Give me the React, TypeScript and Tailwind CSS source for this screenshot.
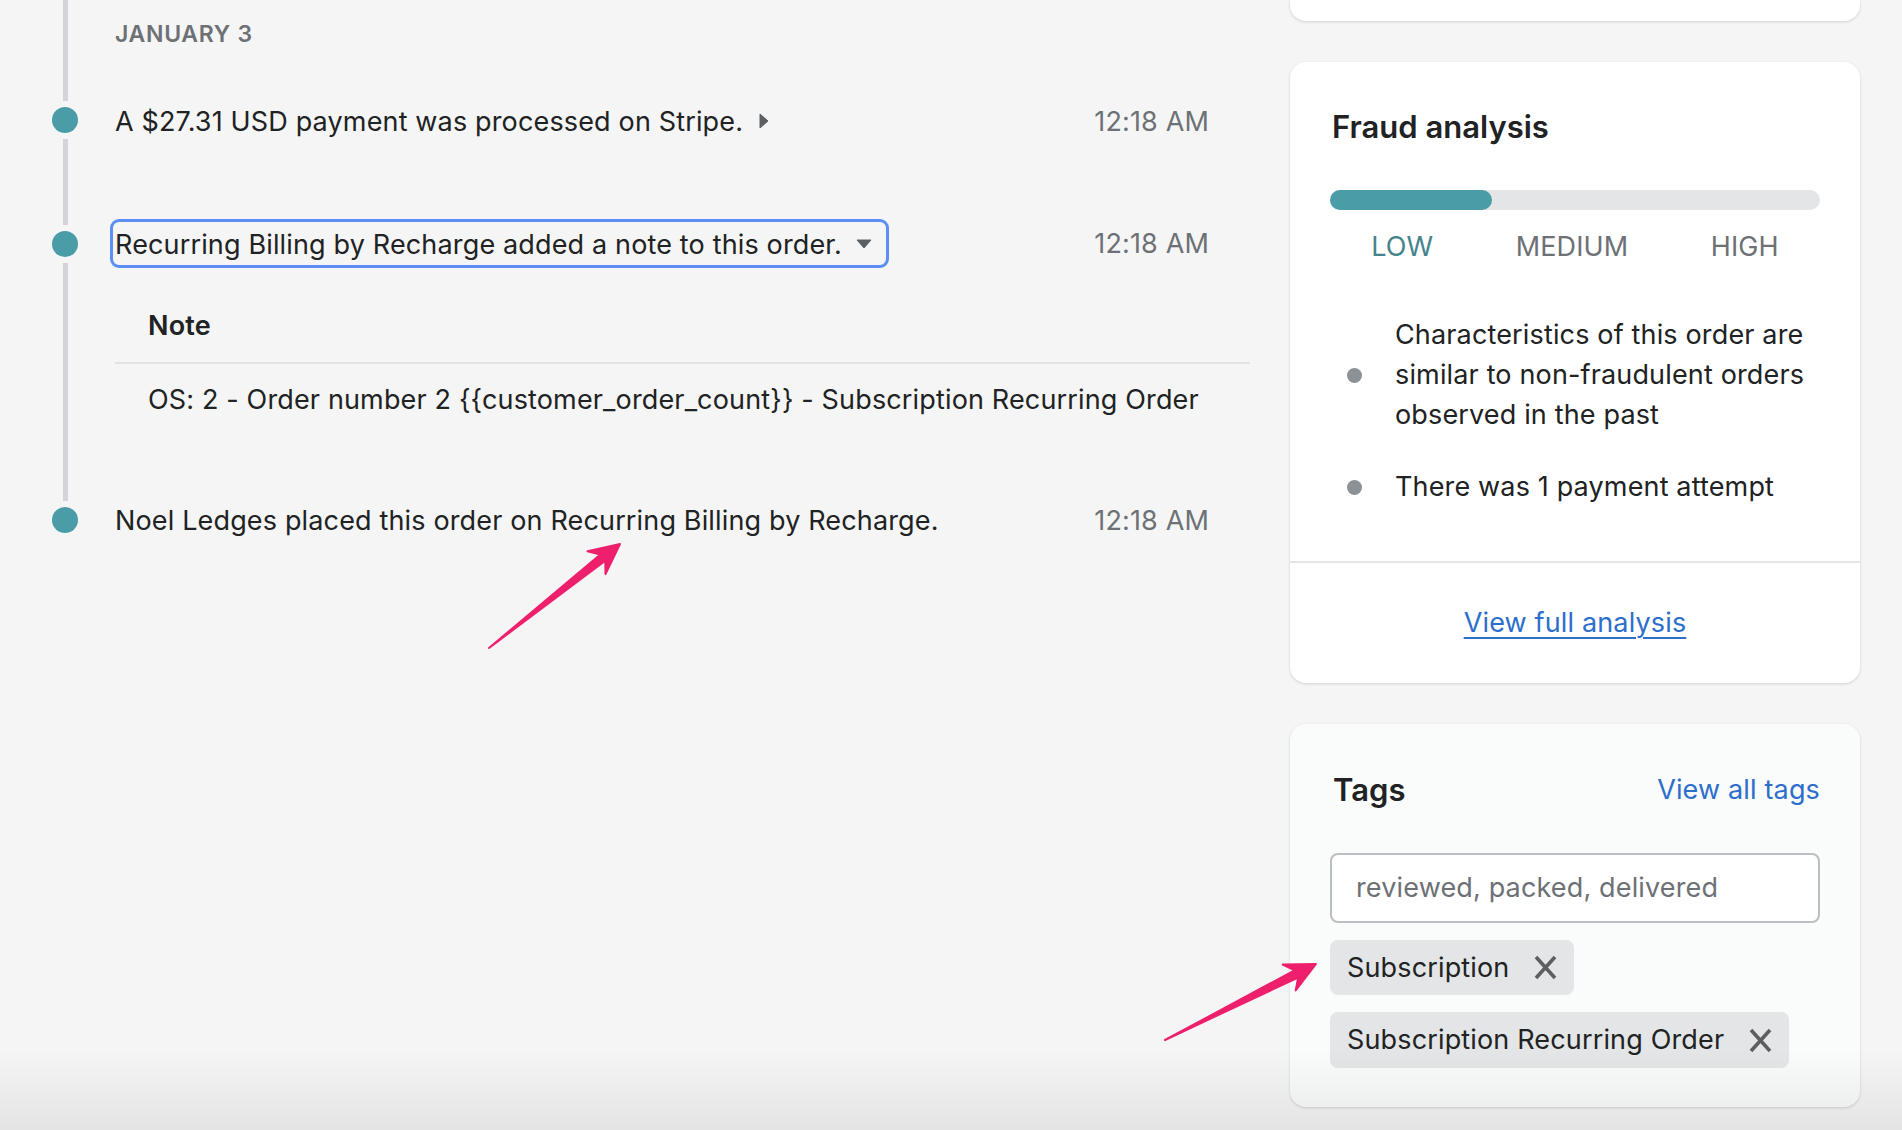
import React from "react";

function Bar({ grow = true }: { grow?: boolean }) {
  return <div className={grow ? "w-[5px] flex-1 bg-[#d3d4d7]" : "w-[5px] bg-[#d3d4d7]"} />;
}

function Dot() {
  return <div className="my-[6px] size-[26px] flex-none rounded-full bg-[#4a9ca7]" />;
}

function Gutter({ kind }: { kind: "line" | "dot" | "dotEnd" }) {
  return (
    <div className="flex w-[115px] flex-none">
      <div className="ml-[52px] flex w-[26px] flex-col items-center">
        {kind === "line" && <Bar />}
        {kind === "dot" && (
          <>
            <Bar />
            <Dot />
            <Bar />
          </>
        )}
        {kind === "dotEnd" && (
          <>
            <Bar />
            <Dot />
            <div className="flex-1" />
          </>
        )}
      </div>
    </div>
  );
}

function Time() {
  return <span className="text-[#6d7175]">12:18 AM</span>;
}

function CloseX() {
  return (
    <svg width="25" height="25" viewBox="0 0 25 25" className="flex-none">
      <path d="M3 2 L22 23 M22 2 L3 23" stroke="#5c5f62" strokeWidth="3.6" strokeLinecap="butt" />
    </svg>
  );
}

export default function App() {
  return (
    <div className="relative flex h-[1130px] w-[1902px] overflow-hidden bg-[#f5f5f5] font-['Inter',sans-serif] text-[27px] leading-[34px] tracking-[0.15px] text-[#202223]">
      {/* Timeline column */}
      <div className="flex w-[1250px] flex-none flex-col">
        <div className="flex h-[96px]">
          <Gutter kind="line" />
          <div className="pt-[20px] text-[23px] font-semibold leading-[28px] tracking-[0.03em] text-[#6d7175]">JANUARY 3</div>
        </div>

        <div className="flex h-[48px]">
          <Gutter kind="dot" />
          <div className="flex flex-1 items-center justify-between pr-[41px] pt-[4px]">
            <div className="flex items-center">
              <span>A $27.31 USD payment was processed on Stripe.</span>
              <svg width="10" height="16" viewBox="0 0 10 16" className="ml-[16px] -mt-[3px]">
                <path d="M1 1 L9 8 L1 15 Z" fill="#5c5f62" strokeLinejoin="round" stroke="#5c5f62" strokeWidth="1" />
              </svg>
            </div>
            <Time />
          </div>
        </div>

        <div className="flex h-[75px]">
          <Gutter kind="line" />
        </div>

        <div className="flex h-[49px]">
          <Gutter kind="dot" />
          <div className="flex flex-1 items-center justify-between pr-[41px]">
            <div className="-ml-[5px] flex h-[49px] items-center rounded-[9px] border-[3px] border-[#5b8ff3] pl-[2px] pr-[14px] pt-[3px]">
              <span>Recurring Billing by Recharge added a note to this order.</span>
              <svg width="16" height="10" viewBox="0 0 16 10" className="ml-[14px] -mt-[3px]">
                <path d="M1 1 L15 1 L8 9 Z" fill="#5c5f62" strokeLinejoin="round" stroke="#5c5f62" strokeWidth="1" />
              </svg>
            </div>
            <span className="pt-[1px] text-[#6d7175]">12:18 AM</span>
          </div>
        </div>

        <div className="flex h-[228px]">
          <Gutter kind="line" />
          <div className="flex flex-1 flex-col">
            <div className="pl-[33px] pt-[41px] font-semibold">Note</div>
            <div className="mt-[19px] h-[2px] bg-[#e1e3e5]" />
            <div className="mt-[19px] pl-[33px]">OS: 2 - Order number 2 {"{{customer_order_count}}"} - Subscription Recurring Order</div>
          </div>
        </div>

        <div className="flex h-[48px]">
          <Gutter kind="dotEnd" />
          <div className="flex flex-1 items-center justify-between pr-[41px] pt-[2px]">
            <span>Noel Ledges placed this order on Recurring Billing by Recharge.</span>
            <Time />
          </div>
        </div>
      </div>

      {/* Right column */}
      <div className="ml-[40px] flex w-[570px] flex-none flex-col">
        <div className="h-[21px] rounded-b-[16px] bg-white shadow-[0_1px_3px_rgba(0,0,0,0.15)]" />

        <div className="mt-[41px] flex h-[621px] flex-col rounded-[16px] bg-white shadow-[0_1px_3px_rgba(0,0,0,0.15)]">
          <div className="flex h-[501px] flex-col border-b-2 border-[#e4e5e7] px-[40px]">
            <div className="ml-[2px] pt-[45px] text-[31px] font-semibold leading-[40px] tracking-normal">Fraud analysis</div>
            <div className="mt-[43px] h-[20px] rounded-full bg-[#e4e5e7]">
              <div className="h-[20px] w-[33%] rounded-full bg-[#4a9ca7]" />
            </div>
            <div className="mt-[20px] flex justify-around text-[#6d7175]">
              <span className="text-[#44838c]">LOW</span>
              <span>MEDIUM</span>
              <span>HIGH</span>
            </div>
            <ul className="mt-[51px] flex flex-col gap-[32px] leading-[40px]">
              <li className="flex items-center">
                <span className="ml-[17px] size-[15px] flex-none rounded-full bg-[#8c9196]" />
                <span className="ml-[33px] w-[430px]">Characteristics of this order are similar to non-fraudulent orders observed in the past</span>
              </li>
              <li className="flex items-center">
                <span className="ml-[17px] size-[15px] flex-none rounded-full bg-[#8c9196]" />
                <span className="ml-[33px]">There was 1 payment attempt</span>
              </li>
            </ul>
          </div>
          <div className="flex flex-1 items-center justify-center">
            <span className="text-[#2c6ecb] underline decoration-[2px] underline-offset-[5px]">View full analysis</span>
          </div>
        </div>

        <div className="mt-[41px] flex h-[383px] flex-col rounded-[16px] bg-[#fafbfb] px-[40px] shadow-[0_1px_3px_rgba(0,0,0,0.15)]">
          <div className="flex items-center justify-between pt-[46px] leading-[40px]">
            <span className="ml-[3px] text-[31px] font-semibold tracking-normal">Tags</span>
            <span className="text-[#2c6ecb]">View all tags</span>
          </div>
          <div className="mt-[43px] flex h-[70px] items-center rounded-[8px] border-2 border-[#babfc3] bg-white pl-[24px] text-[#6d7175]">
            reviewed, packed, delivered
          </div>
          <div className="mt-[17px] flex flex-col items-start gap-[17px]">
            <div className="flex h-[55px] items-center gap-[24px] rounded-[8px] bg-[#e4e5e7] pl-[17px] pr-[16px]">
              <span>Subscription</span>
              <CloseX />
            </div>
            <div className="flex h-[56px] items-center gap-[24px] rounded-[8px] bg-[#e4e5e7] pl-[17px] pr-[16px]">
              <span>Subscription Recurring Order</span>
              <CloseX />
            </div>
          </div>
        </div>
      </div>

      {/* bottom screenshot shading */}
      <div className="pointer-events-none absolute bottom-0 left-0 right-0 h-[80px] bg-linear-to-b from-transparent to-black/[0.07]" />

      {/* annotation arrows */}
      <svg className="pointer-events-none absolute left-0 top-0" width="1902" height="1130" viewBox="0 0 1902 1130">
        <path
          d="M489 648 L600.3 554.6 L587.5 551.3 L620 544 L605.5 574.1 L605.3 560.8 Z"
          fill="#ee1f6d"
          stroke="#ee1f6d"
          strokeWidth="2"
          strokeLinejoin="round"
        />
        <path
          d="M1165 1040 L1294.6 970.3 L1282.7 964.6 L1316 964 L1295.7 990.4 L1298.2 977.5 Z"
          fill="#ee1f6d"
          stroke="#ee1f6d"
          strokeWidth="2"
          strokeLinejoin="round"
        />
      </svg>
    </div>
  );
}
